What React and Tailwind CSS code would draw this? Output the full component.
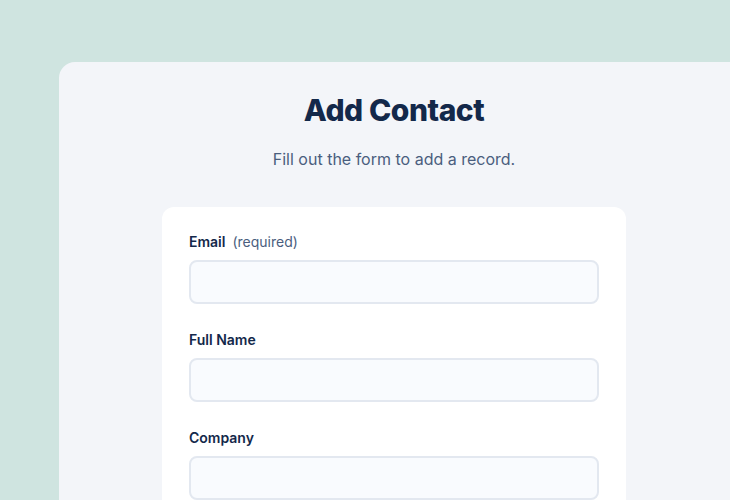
export default function App() {
  const fields = [
    { label: "Email", hint: "(required)" },
    { label: "Full Name" },
    { label: "Company" },
  ];
  return (
    <div
      className="w-[730px] h-[500px] overflow-hidden bg-[#cfe4e0] pt-[62px] pl-[59px]"
      style={{ fontFamily: "Inter, 'Noto Sans', sans-serif" }}
    >
      <div className="w-[671px] h-[600px] bg-[#f3f5f9] rounded-tl-[16px] pt-[30px] flex flex-col items-center pr-px">
        <h1 className="text-[30px] leading-[36px] font-extrabold text-[#13284a] tracking-[-0.015em]">
          Add Contact
        </h1>
        <p className="mt-[19px] text-[16px] leading-[24px] text-[#4a5e7e]">
          Fill out the form to add a record.
        </p>
        <div className="mt-[36px] w-[464px] bg-white rounded-[12px] px-[27px] pt-[25px] pb-6 flex flex-col gap-[26px]">
          {fields.map((f) => (
            <div key={f.label} className="flex flex-col">
              <label className="h-5 text-[14px] leading-5 mb-2 text-[#13284a]">
                <span className="font-semibold">{f.label}</span>
                {f.hint && (
                  <span className="ml-[7px] text-[#4a5e7e] font-normal">{f.hint}</span>
                )}
              </label>
              <div className="h-[44px] rounded-[8px] border-2 border-[#e3e8f0] bg-[#f9fbfe]" />
            </div>
          ))}
        </div>
      </div>
    </div>
  );
}
